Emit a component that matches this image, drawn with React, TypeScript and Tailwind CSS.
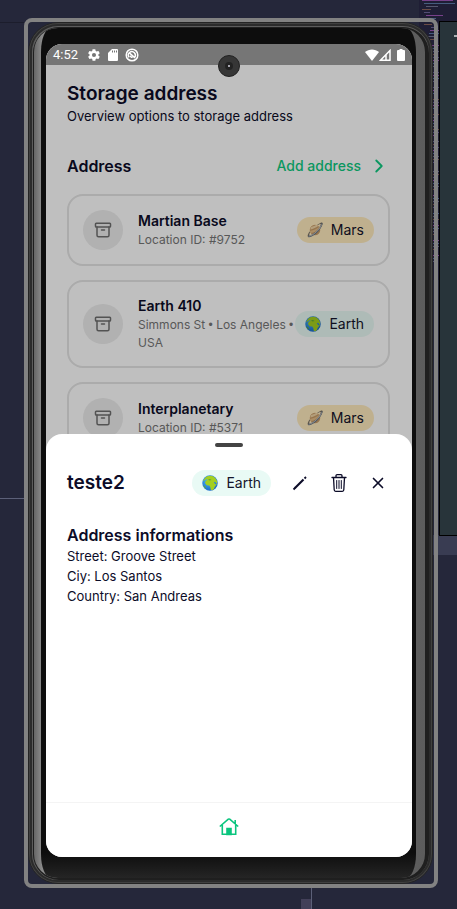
import type { ReactNode } from "react";
import { Archive, ChevronRight, X } from "lucide-react";

type Planet = "Mars" | "Earth";

interface Location {
  name: string;
  detail: string[];
  planet: Planet;
}

const locations: Location[] = [
  { name: "Martian Base", detail: ["Location ID: #9752"], planet: "Mars" },
  { name: "Earth 410", detail: ["Simmons St", "Los Angeles", "USA"], planet: "Earth" },
  { name: "Interplanetary", detail: ["Location ID: #5371"], planet: "Mars" },
];

function GlobeIcon() {
  return (
    <svg viewBox="0 0 32 32" className="size-4 shrink-0" aria-hidden="true">
      <defs>
        <radialGradient id="sea" cx="0.4" cy="0.35" r="0.7">
          <stop offset="0" stopColor="#4db8f5" />
          <stop offset="1" stopColor="#1565c8" />
        </radialGradient>
      </defs>
      <circle cx="16" cy="16" r="15.5" fill="url(#sea)" />
      <path
        d="M7 5c3-3 9-5 15-2.500 4 2 7 6 8.500 11l-1.500 5-2.500-5-3 1 3 4 3-.5c-1 3-3.500 4-4.500 6.500l-1 3.500-3.500 2.500-3-1-1-5.500-2-3-5-.5-3.500-4.500 1.500-4.500 3.500-1.500-1-2-3 1.500-3 2-2 .5C4 9.500 5 7 7 5z"
        fill="#a4cf1f"
      />
      <path d="M3 21l3 1 2 4-1 1c-2-1.500-3.500-4-4-6zM12 9l4-1 3 2-4 1z" fill="#5da93a" />
    </svg>
  );
}

function RingedPlanetIcon() {
  return (
    <svg viewBox="0 0 32 32" className="size-4 shrink-0" aria-hidden="true">
      <path d="M2 30c-3-4 4-13 12-19S29-1 31 2c1 2-1 6-4 10l-2-2c2-3 3-5 2.500-6C26 3 20 7 14 12S3 24 5 27z" fill="#7d7468" />
      <circle cx="16" cy="16" r="10.500" fill="#c99c68" />
      <path d="M8 10c4-1 9-3 11-4.500l4 2C19 11 12 14 6.500 15z" fill="#efd3a5" />
      <path d="M6 18c8-1 15-5 19-8.500l1.500 3.500C22 18 14 21 7 22z" fill="#e5bd86" />
      <path d="M2 30c5 2 12-3 18-8.500S31 8 31 2l-3 2c0 4-5 11-10.500 15.500S6 27.500 4.500 26z" fill="#5f6f80" />
      <path d="M4 28c5-.5 10-4 15-8.500S28 9 29 5" fill="none" stroke="#e8dccb" strokeWidth="1.500" />
    </svg>
  );
}

function PlanetTag({ planet }: { planet: Planet }) {
  const tone = planet === "Mars" ? "bg-[#ffebbe]" : "bg-[#e9faf5]";
  return (
    <span className={`flex h-[26px] shrink-0 items-center gap-2 rounded-full px-2.5 text-sm text-[#14142b] ${tone}`}>
      {planet === "Mars" ? <RingedPlanetIcon /> : <GlobeIcon />}
      {planet}
    </span>
  );
}

function LocationCard({ location }: { location: Location }) {
  return (
    <li className="flex items-center rounded-2xl border-2 border-[#e4e4e4] p-3.5">
      <span className="flex size-10 shrink-0 items-center justify-center rounded-full bg-[#ececec] text-[#6f6f6f]">
        <Archive size={18} strokeWidth={2} />
      </span>
      <div className="ml-[15px] min-w-0 flex-1">
        <h3 className="text-sm leading-5 font-semibold text-[#0c0c28]">{location.name}</h3>
        <p className="text-xs leading-[18px] text-[#767676]">
          {location.detail.map((part, i) => (
            <span key={part}>
              {i > 0 && <span className="font-['Liberation_Sans',sans-serif]">{"\u00a0• "}</span>}
              {part}
            </span>
          ))}
        </p>
      </div>
      <PlanetTag planet={location.planet} />
    </li>
  );
}

function StatusBar() {
  return (
    <div className="flex h-[21px] shrink-0 items-center justify-between bg-[#767676] pr-[7px] pl-[7px] text-white">
      <div className="flex items-center gap-[7px]">
        <span className="mr-0.5 font-[Roboto,sans-serif] text-[13px] leading-4">4:52</span>
        <svg viewBox="0 0 24 24" className="size-3.5" fill="currentColor" aria-hidden="true">
          <path fillRule="evenodd" d="M19.400 13a7.500 7.500 0 0 0 0-2l2.100-1.600c.2-.2.2-.4.1-.7l-2-3.400c-.1-.2-.4-.3-.6-.2l-2.500 1a7.300 7.300 0 0 0-1.700-1l-.4-2.600a.5.5 0 0 0-.5-.5h-4a.5.5 0 0 0-.5.500L9 5.100a8 8 0 0 0-1.700 1l-2.500-1c-.2-.1-.5 0-.6.2l-2 3.400c-.1.2-.1.500.1.700L4.500 11a7.500 7.500 0 0 0 0 2l-2.200 1.600c-.2.2-.2.4-.1.700l2 3.400c.1.2.4.3.6.2l2.500-1a7.300 7.300 0 0 0 1.700 1l.4 2.600c0 .3.200.5.500.5h4c.3 0 .5-.2.500-.5l.4-2.600a8 8 0 0 0 1.700-1l2.500 1c.2.1.5 0 .6-.2l2-3.400c.1-.2.1-.5-.1-.7zM12 15.500a3.500 3.500 0 1 1 0-7 3.500 3.500 0 0 1 0 7z" />
        </svg>
        <svg viewBox="0 0 10 12" className="h-3 w-2.5" fill="currentColor" aria-hidden="true">
          <path fillRule="evenodd" d="M9 0H4L0 4v7a1 1 0 0 0 1 1h8a1 1 0 0 0 1-1V1a1 1 0 0 0-1-1zM4 1.500h1v2H4zm2 0h1v2H6zm2 0h1v2H8z" />
        </svg>
        <svg viewBox="0 0 24 24" className="size-3.5" fill="none" stroke="currentColor" strokeWidth="2.500" aria-hidden="true">
          <circle cx="12" cy="12" r="10" />
          <path d="M7 16a6 6 0 1 1 9 .5M7 8l10 9M9 13a3.500 3.500 0 0 0 4 3" />
        </svg>
      </div>
      <div className="flex items-center">
        <svg viewBox="0 0 14 12" className="h-3 w-3.5" fill="currentColor" aria-hidden="true">
          <path d="M7 12 0 3c4-3.500 10-3.500 14 0z" />
        </svg>
        <svg viewBox="0 0 12 12" className="h-3 w-3" aria-hidden="true">
          <path d="M1.500 11.200 11 1.500v9.700zM7 6v5" fill="none" stroke="currentColor" strokeWidth="1.500" />
        </svg>
        <svg viewBox="0 0 8 12" className="ml-1.5 h-3 w-2" fill="currentColor" aria-hidden="true">
          <path d="M2.500 0h3v1H7a1 1 0 0 1 1 1v9a1 1 0 0 1-1 1H1a1 1 0 0 1-1-1V2a1 1 0 0 1 1-1h1.500z" />
        </svg>
      </div>
    </div>
  );
}

function IconButton({ label, children }: { label: string; children: ReactNode }) {
  return (
    <button type="button" aria-label={label} className="flex size-5 items-center justify-center text-[#0c0c28]">
      {children}
    </button>
  );
}

function DetailSheet() {
  return (
    <section role="dialog" aria-label="teste2" className="absolute inset-x-0 bottom-0 flex h-[52%] flex-col rounded-t-2xl bg-white">
      <div className="mx-auto mt-[9px] h-1 w-7 shrink-0 rounded-full bg-[#444444]" />
      <header className="mt-[22px] flex items-center justify-between pr-6 pl-[21px]">
        <h2 className="text-[19px] leading-7 font-semibold">teste2</h2>
        <div className="flex items-center gap-[19px]">
          <PlanetTag planet="Earth" />
          <IconButton label="Edit">
            <svg viewBox="0 0 16 16" className="size-4" fill="none" stroke="currentColor" aria-hidden="true">
              <path d="M3 13 11.500 4.500" strokeWidth="2.200" />
              <path d="M1.500 14.500 3.500 12.500M12.500 3.500 14 2" strokeWidth="1.800" />
            </svg>
          </IconButton>
          <IconButton label="Delete">
            <svg viewBox="0 0 16 18" className="h-[18px] w-4" fill="none" stroke="currentColor" strokeWidth="1.300" strokeLinecap="round" aria-hidden="true">
              <path d="M1 3.500h14M5 3.500V1.700C5 1 5.500.7 6 .7h4c.5 0 1 .3 1 1v1.800M2.500 3.500l.7 12.300c0 .9.600 1.500 1.500 1.500h6.600c.9 0 1.500-.6 1.500-1.500l.7-12.300" />
              <path d="M5.700 6.500v8M8 6.500v8M10.300 6.500v8" strokeWidth="1" />
            </svg>
          </IconButton>
          <IconButton label="Close">
            <X size={18} strokeWidth={2.2} className="shrink-0" />
          </IconButton>
        </div>
      </header>
      <div className="mt-[27px] px-[21px]">
        <h3 className="text-base leading-[22px] font-semibold">Address informations</h3>
        <p className="text-[13px] leading-5">Street: Groove Street</p>
        <p className="text-[13px] leading-5">Ciy: Los Santos</p>
        <p className="text-[13px] leading-5">Country: San Andreas</p>
      </div>
      <nav className="mt-auto flex h-[55px] items-center justify-center border-t border-[#f4f4f4] pb-1.5">
        <a href="#home" aria-label="Home" className="text-[#0ac57e]">
          <svg viewBox="0 0 20 18" className="h-[18px] w-5" fill="none" stroke="currentColor" strokeWidth="1.600" aria-hidden="true">
            <path d="M.8 8.500 9.300 1.200Q10 .7 10.700 1.200L19.200 8.500M3.300 7v9.200h13.400V7M16.200 6V2" />
            <path d="M8 10.500h4v6H8z" fill="currentColor" />
          </svg>
        </a>
      </nav>
    </section>
  );
}

function DesktopBackdrop() {
  const code = ["#a855b8", "#5c7fa8", "#787a91", "#94644e", "#6f6597"];
  return (
    <div className="absolute inset-0 overflow-hidden" aria-hidden="true">
      <div className="absolute top-[22px] left-0 h-px w-6 bg-[#1c1d2c]" />
      <div className="absolute top-[498px] left-0 h-px w-6 bg-[#5c6078]" />
      <div className="absolute top-0 right-0 h-[280px] w-[38px] bg-[#1f1e35]">
        <svg className="h-full w-full">
          {Array.from({ length: 88 }, (_, i) => (
            <rect
              key={i}
              x={i < 7 ? 3 + (i % 3) * 2 : 5 + ((i * 7) % 8)}
              y={i * 3}
              width={i < 2 ? 31 : 4 + ((i * 11) % 14)}
              height="1"
              fill={code[i % 5]}
              opacity="0.65"
            />
          ))}
        </svg>
      </div>
      <div className="absolute top-[535px] right-0 h-5 w-6 bg-[#393c52]" />
      <div className="absolute top-[21px] right-0 h-[515px] w-[18px] border border-r-0 border-black bg-[#28343a]">
        <div className="absolute top-[13px] right-0 h-0.5 w-[3px] bg-[#a9b0b4]" />
      </div>
      <div className="absolute bottom-0 left-[301px] h-2.5 w-2.5 bg-[#434059]" />
      <div className="absolute bottom-0 left-[311px] h-6 w-px bg-[#5c6078]" />
    </div>
  );
}

export default function App() {
  return (
    <main className="relative flex h-screen min-h-[700px] bg-[#25273a] pt-[18px] pr-[19px] pb-[21px] pl-6 font-[Inter,'Liberation_Sans',sans-serif] text-[#0c0c28]">
      <DesktopBackdrop />
      <div className="relative flex flex-1 rounded-lg border-4 border-[#828282] pr-px">
        <div className="flex flex-1 rounded-[30px] border border-[#242424] bg-[#404040] p-px">
          <div className="flex flex-1 rounded-[28px] border-2 border-[#2b2b2b] bg-[#5c5c5c] pt-px pl-px">
            <div className="flex flex-1 rounded-[26px] border-t border-r-4 border-b-2 border-l border-[#1f1f1f] bg-[#1f1f1f]">
              <div className="flex flex-1 overflow-hidden rounded-[24px] bg-linear-to-r from-[#666666] via-[#8b8b8b] via-2% to-[#5c5c5c] pr-[9px] pl-[7px]">
                <div className="flex flex-1 rounded-[10px/24px] bg-linear-to-b from-[#0d0d0d] from-97% to-[#252525] pt-4 pr-1 pb-[21px] pl-[5px]">
                  <div className="relative flex flex-1 flex-col overflow-hidden rounded-2xl bg-white">
                    <StatusBar />
                    <div className="relative min-h-0 flex-1 overflow-hidden pt-[15px] pr-[22px] pl-[21px]">
                      <h1 className="text-[19px] leading-7 font-semibold">Storage address</h1>
                      <p className="text-[13px] leading-4">Overview options to storage address</p>
                      <div className="mt-[30px] flex items-center justify-between">
                        <h2 className="text-base leading-6 font-semibold">Address</h2>
                        <a href="#add" className="flex items-center gap-[7px] text-sm leading-6 font-medium text-[#0fca80]">
                          Add address
                          <ChevronRight size={22} strokeWidth={2} />
                        </a>
                      </div>
                      <ul className="mt-4 flex flex-col gap-3.5">
                        {locations.map((location) => (
                          <LocationCard key={location.name} location={location} />
                        ))}
                      </ul>
                      <div className="absolute inset-0 bg-black/25" />
                    </div>
                    <DetailSheet />
                    <div className="absolute top-[11px] left-1/2 flex size-[22px] -translate-x-1/2 items-center justify-center rounded-full border border-[#222222] bg-[#363636]">
                      <span className="flex size-2 items-center justify-center rounded-full bg-[#222222]">
                        <span className="size-0.5 rounded-full bg-[#d5d3e0]" />
                      </span>
                    </div>
                  </div>
                </div>
              </div>
            </div>
          </div>
        </div>
      </div>
    </main>
  );
}
